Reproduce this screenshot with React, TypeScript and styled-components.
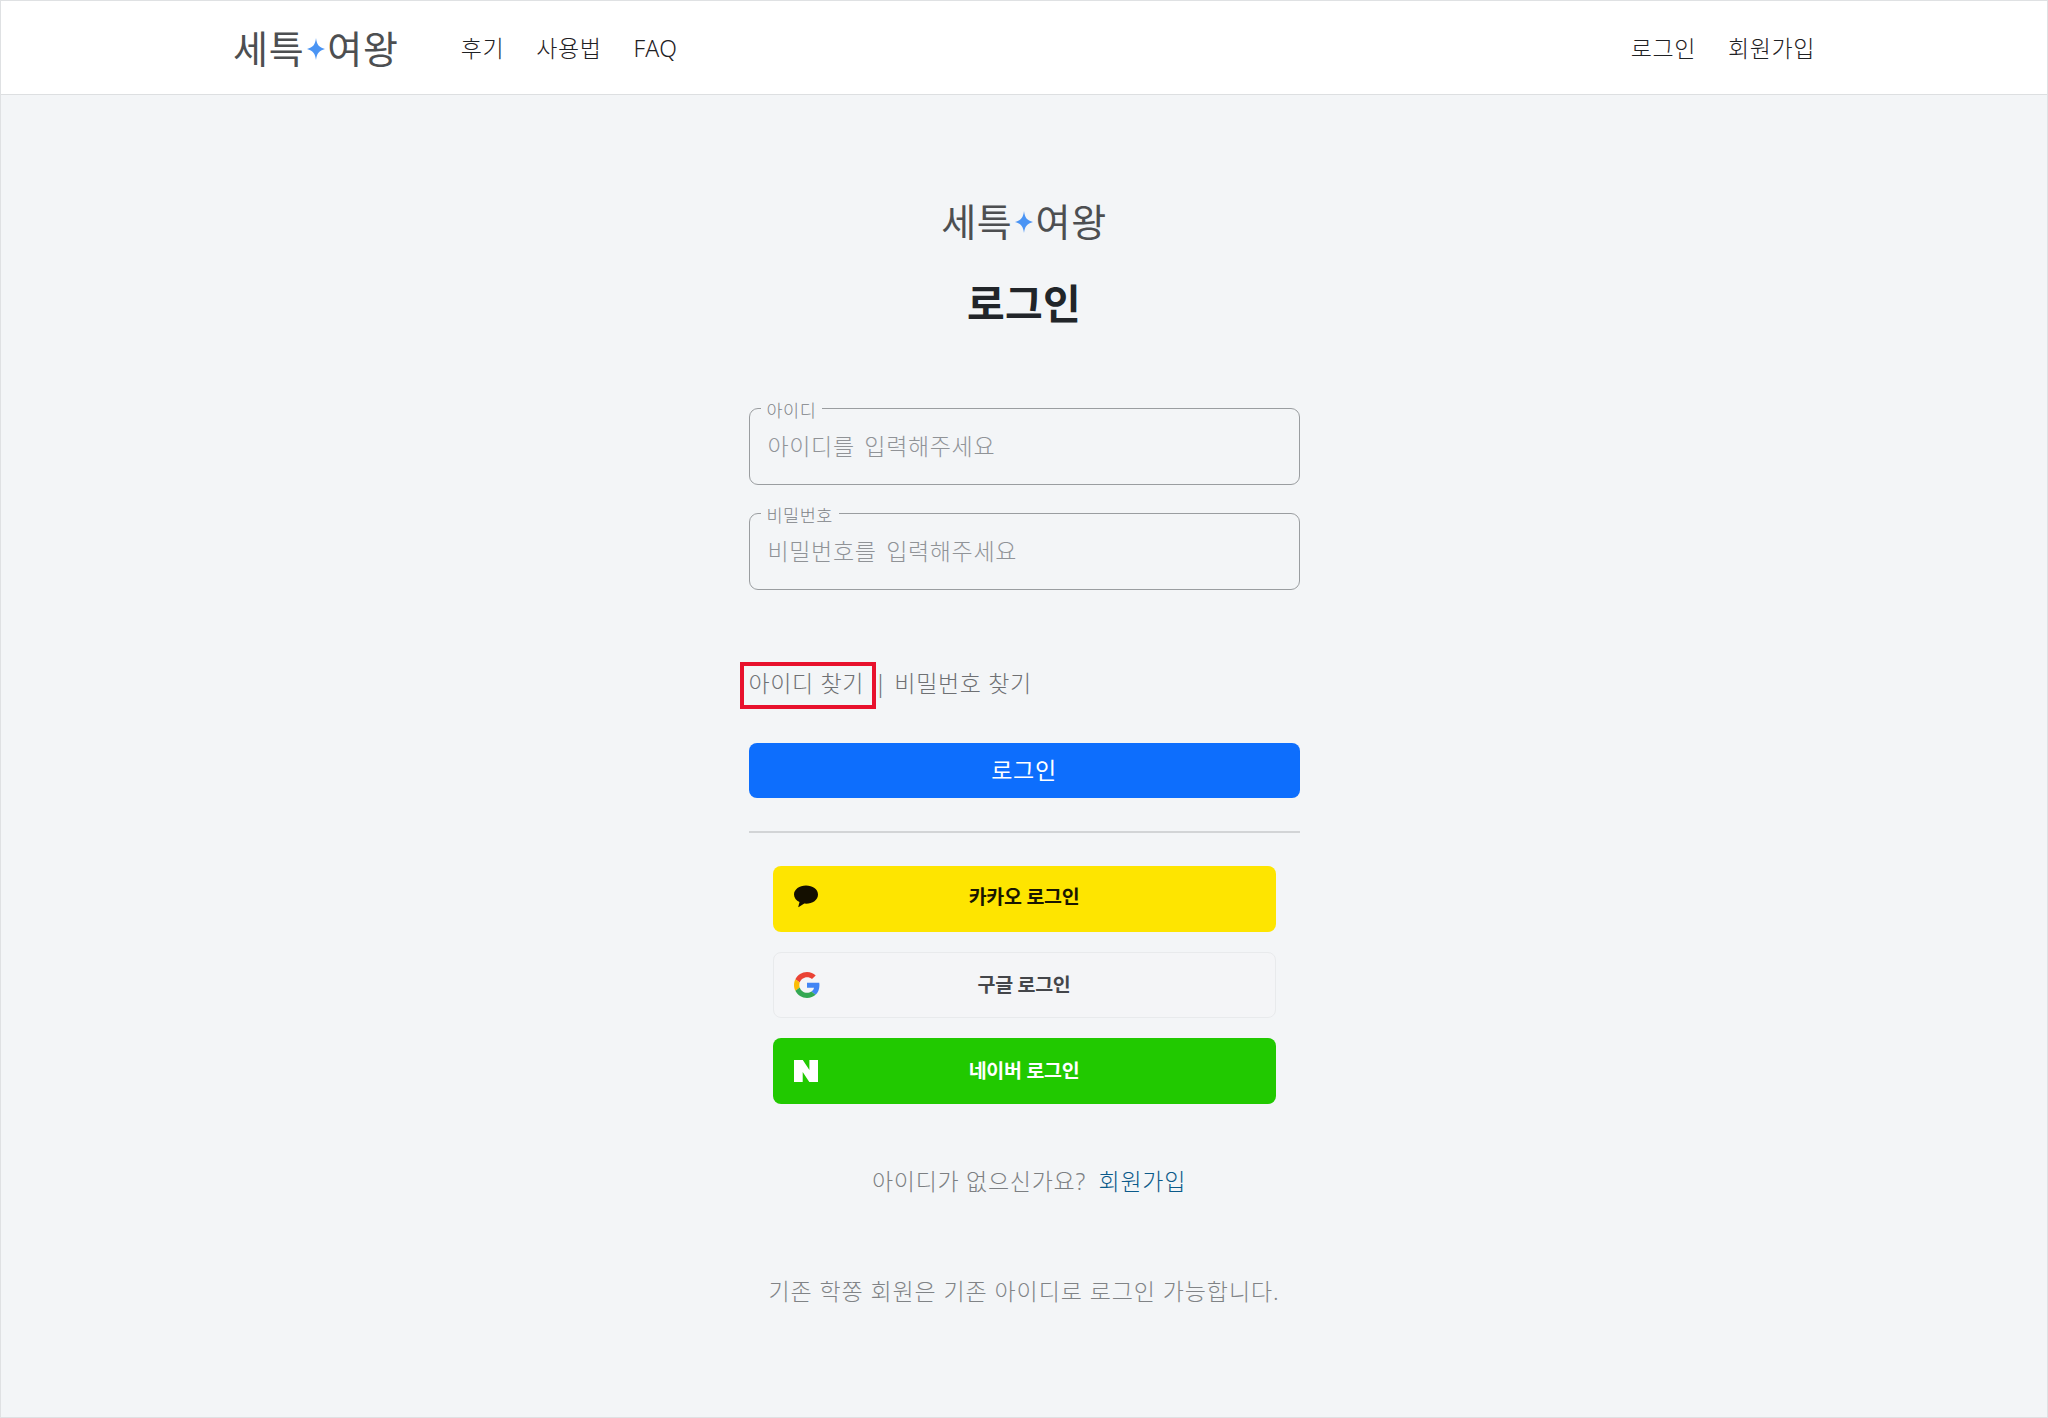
import React from "react";
import styled, { createGlobalStyle } from "styled-components";

const FONT = `"Noto Sans", "Noto Sans CJK KR", sans-serif`;

const Global = createGlobalStyle`
  html, body { margin: 0; padding: 0; background: #f3f5f7; }
  * { box-sizing: border-box; }
  body { font-family: ${FONT}; font-weight: 300; }
`;

const Page = styled.div`
  width: 2048px;
  height: 1418px;
  display: flex;
  flex-direction: column;
  background: #f3f5f7;
  border: 1px solid #dfe1e3;
  overflow: hidden;
`;

const Header = styled.header`
  height: 94px;
  flex: none;
  background: #fff;
  border-bottom: 1px solid #dddfe1;
  display: flex;
  justify-content: center;
`;

const HeaderInner = styled.div`
  width: 1582px;
  display: flex;
  align-items: center;
  justify-content: space-between;
`;

const NavGroup = styled.nav`
  display: flex;
  align-items: center;
`;

const LogoMark = styled.div`
  display: inline-flex;
  align-items: center;
  height: 46px;
  font-size: 38px;
  line-height: 46px;
  letter-spacing: 0.7px;
  font-weight: 400;
  color: #4d4f51;
  white-space: nowrap;
`;

const Star = styled.svg`
  width: 18px;
  height: 22px;
  flex: none;
  margin: 2px 2.5px 0;
`;

const NavLinks = styled.div`
  display: flex;
  align-items: center;
  gap: 32px;
  margin-left: 62px;
`;

const NavLink = styled.a`
  font-size: 23px;
  line-height: 30px;
  color: #1f2124;
  letter-spacing: 0.6px;
  white-space: nowrap;
  padding-top: 1px;
`;

const Main = styled.main`
  flex: 1;
  display: flex;
  flex-direction: column;
  align-items: center;
`;

const Card = styled.div`
  width: 551px;
  display: flex;
  flex-direction: column;
  align-items: stretch;
`;

const Brand = styled.div`
  display: flex;
  justify-content: center;
  margin-top: 103px;
`;

const Title = styled.h1`
  margin: 31px 0 0;
  font-size: 41px;
  line-height: 56px;
  font-weight: 700;
  color: #212529;
  text-align: center;
  letter-spacing: 0.3px;
`;

const Fields = styled.div`
  display: flex;
  flex-direction: column;
  gap: 16px;
  margin-top: 65px;
`;

const Field = styled.fieldset`
  margin: 0;
  padding: 0;
  height: 89px;
  border: 1px solid #9a9da0;
  border-radius: 9px;
  min-width: 0;
`;

const FieldLegend = styled.legend`
  margin-left: 11px;
  padding: 4px 6px 0;
  font-size: 17.5px;
  line-height: 20px;
  color: #808387;
  letter-spacing: 0.5px;
`;

const FieldInput = styled.input`
  display: block;
  width: 100%;
  height: 52px;
  padding: 0 18px;
  border: 0;
  outline: 0;
  background: transparent;
  font-family: ${FONT};
  font-weight: 300;
  font-size: 23px;
  color: #333;
  letter-spacing: 0.65px;
  word-spacing: 3px;
  &::placeholder { color: #909397; opacity: 1; }
`;

const FindRow = styled.div`
  display: flex;
  align-items: center;
  margin-top: 78px;
  height: 30px;
  font-size: 23px;
  line-height: 30px;
  color: #6e7073;
  letter-spacing: 0.65px;
`;

const FindLink = styled.a<{ $marked?: boolean }>`
  position: relative;
  white-space: nowrap;
  ${(p) =>
    p.$marked &&
    `&::after {
      content: "";
      position: absolute;
      left: -9px;
      right: -12px;
      top: -6px;
      bottom: -11px;
      border: 4px solid #e8112d;
    }`}
`;

const Sep = styled.span`
  margin: 0 7px 0 10px;
`;

const LoginButton = styled.button`
  height: 55px;
  margin-top: 45px;
  border: 0;
  border-radius: 8px;
  background: #0d6efd;
  color: #fff;
  font-family: ${FONT};
  font-weight: 400;
  font-size: 23px;
  letter-spacing: 0.65px;
  padding: 0 0 3px;
`;

const Divider = styled.hr`
  margin: 33px 0 0;
  border: 0;
  border-top: 2px solid #d2d4d6;
`;

const Socials = styled.div`
  display: flex;
  flex-direction: column;
  gap: 20px;
  margin: 33px 24px 0;
`;

const SocialButton = styled.button<{ $bg: string; $fg: string; $line?: string; $lift?: number }>`
  position: relative;
  height: 66px;
  display: flex;
  align-items: center;
  justify-content: center;
  border: ${(p) => (p.$line ? `1px solid ${p.$line}` : "0")};
  border-radius: 8px;
  background: ${(p) => p.$bg};
  color: ${(p) => p.$fg};
  font-family: ${FONT};
  font-size: 19.5px;
  font-weight: 700;
  letter-spacing: -0.3px;
  padding: 0 0 ${(p) => p.$lift ?? 4}px;
`;

const SocialIcon = styled.svg<{ $top: number }>`
  position: absolute;
  left: 20px;
  top: ${(p) => p.$top}px;
  width: 26px;
  height: 26px;
`;

const SignupLine = styled.p`
  margin: 62px 0 0;
  padding-left: 10px;
  text-align: center;
  font-size: 23px;
  line-height: 30px;
  color: #7c7f82;
  letter-spacing: 0.7px;
  white-space: nowrap;
`;

const SignupLink = styled.a`
  color: #0b5a8a;
  margin-left: 6px;
`;

const Notice = styled.p`
  margin: 80px 0 0;
  text-align: center;
  font-size: 23px;
  line-height: 30px;
  color: #808386;
  letter-spacing: 0.9px;
  white-space: nowrap;
`;

const Spark = () => (
  <Star viewBox="0 0 18 22" aria-hidden="true">
    <path d="M9 0 C9.800 6.500 12 9.500 18 11 C12 12.500 9.800 15.500 9 22 C8.200 15.500 6 12.500 0 11 C6 9.500 8.200 6.500 9 0 Z" fill="#4a94f4" />
  </Star>
);

const Logo = () => (
  <LogoMark>
    <span>세특</span>
    <Spark />
    <span>여왕</span>
  </LogoMark>
);

export default function App() {
  return (
    <>
      <Global />
      <Page>
        <Header>
          <HeaderInner>
            <NavGroup>
              <Logo />
              <NavLinks>
                <NavLink>후기</NavLink>
                <NavLink>사용법</NavLink>
                <NavLink>FAQ</NavLink>
              </NavLinks>
            </NavGroup>
            <NavLinks>
              <NavLink>로그인</NavLink>
              <NavLink>회원가입</NavLink>
            </NavLinks>
          </HeaderInner>
        </Header>
        <Main>
          <Card>
            <Brand>
              <Logo />
            </Brand>
            <Title>로그인</Title>
            <Fields>
              <Field>
                <FieldLegend>아이디</FieldLegend>
                <FieldInput placeholder="아이디를 입력해주세요" />
              </Field>
              <Field>
                <FieldLegend>비밀번호</FieldLegend>
                <FieldInput type="password" placeholder="비밀번호를 입력해주세요" />
              </Field>
            </Fields>
            <FindRow>
              <FindLink $marked>아이디 찾기</FindLink>
              <Sep>|</Sep>
              <FindLink>비밀번호 찾기</FindLink>
            </FindRow>
            <LoginButton>로그인</LoginButton>
            <Divider />
            <Socials>
              <SocialButton $bg="#fee500" $fg="#191600" $lift={8}>
                <SocialIcon $top={18} viewBox="0 0 26 26" aria-hidden="true">
                  <path d="M13 1.500C6.400 1.500 1 5.400 1 10.400c0 3.200 2.200 6 5.500 7.600-.3 1.300-1 4-1.200 4.800 0 .4.200.5.500.3l5.500-3.500c.6.1 1.100.1 1.700.1 6.600 0 12-3.900 12-9.300S19.600 1.500 13 1.500Z" fill="#140f00" />
                </SocialIcon>
                카카오 로그인
              </SocialButton>
              <SocialButton $bg="#f4f5f7" $fg="#44464a" $line="#e8eaec">
                <SocialIcon $top={19} viewBox="0 0 48 48" aria-hidden="true">
                  <path fill="#EA4335" d="M24 9.500c3.540 0 6.710 1.220 9.210 3.600l6.850-6.850C35.900 2.380 30.470 0 24 0 14.620 0 6.510 5.380 2.560 13.220l7.980 6.190C12.430 13.720 17.740 9.500 24 9.500z" />
                  <path fill="#4285F4" d="M46.980 24.550c0-1.570-.15-3.090-.38-4.550H24v9.020h12.940c-.58 2.960-2.260 5.480-4.780 7.180l7.730 6c4.510-4.180 7.090-10.360 7.090-17.650z" />
                  <path fill="#FBBC05" d="M10.530 28.590c-.48-1.450-.76-2.990-.76-4.590s.27-3.140.76-4.590l-7.980-6.190C.92 16.460 0 20.120 0 24c0 3.880.92 7.540 2.560 10.780l7.970-6.190z" />
                  <path fill="#34A853" d="M24 48c6.480 0 11.930-2.130 15.890-5.810l-7.730-6c-2.150 1.450-4.920 2.300-8.160 2.300-6.260 0-11.570-4.220-13.470-9.910l-7.980 6.190C6.510 42.620 14.620 48 24 48z" />
                </SocialIcon>
                구글 로그인
              </SocialButton>
              <SocialButton $bg="#21c900" $fg="#ffffff">
                <SocialIcon $top={20} viewBox="0 0 26 26" aria-hidden="true">
                  <path d="M1 2h8.800l6.600 10V2H25v22h-8.700L9.700 14v10H1Z" fill="#fff" />
                </SocialIcon>
                네이버 로그인
              </SocialButton>
            </Socials>
            <SignupLine>
              아이디가 없으신가요? <SignupLink>회원가입</SignupLink>
            </SignupLine>
            <Notice>기존 학쫑 회원은 기존 아이디로 로그인 가능합니다.</Notice>
          </Card>
        </Main>
      </Page>
    </>
  );
}
